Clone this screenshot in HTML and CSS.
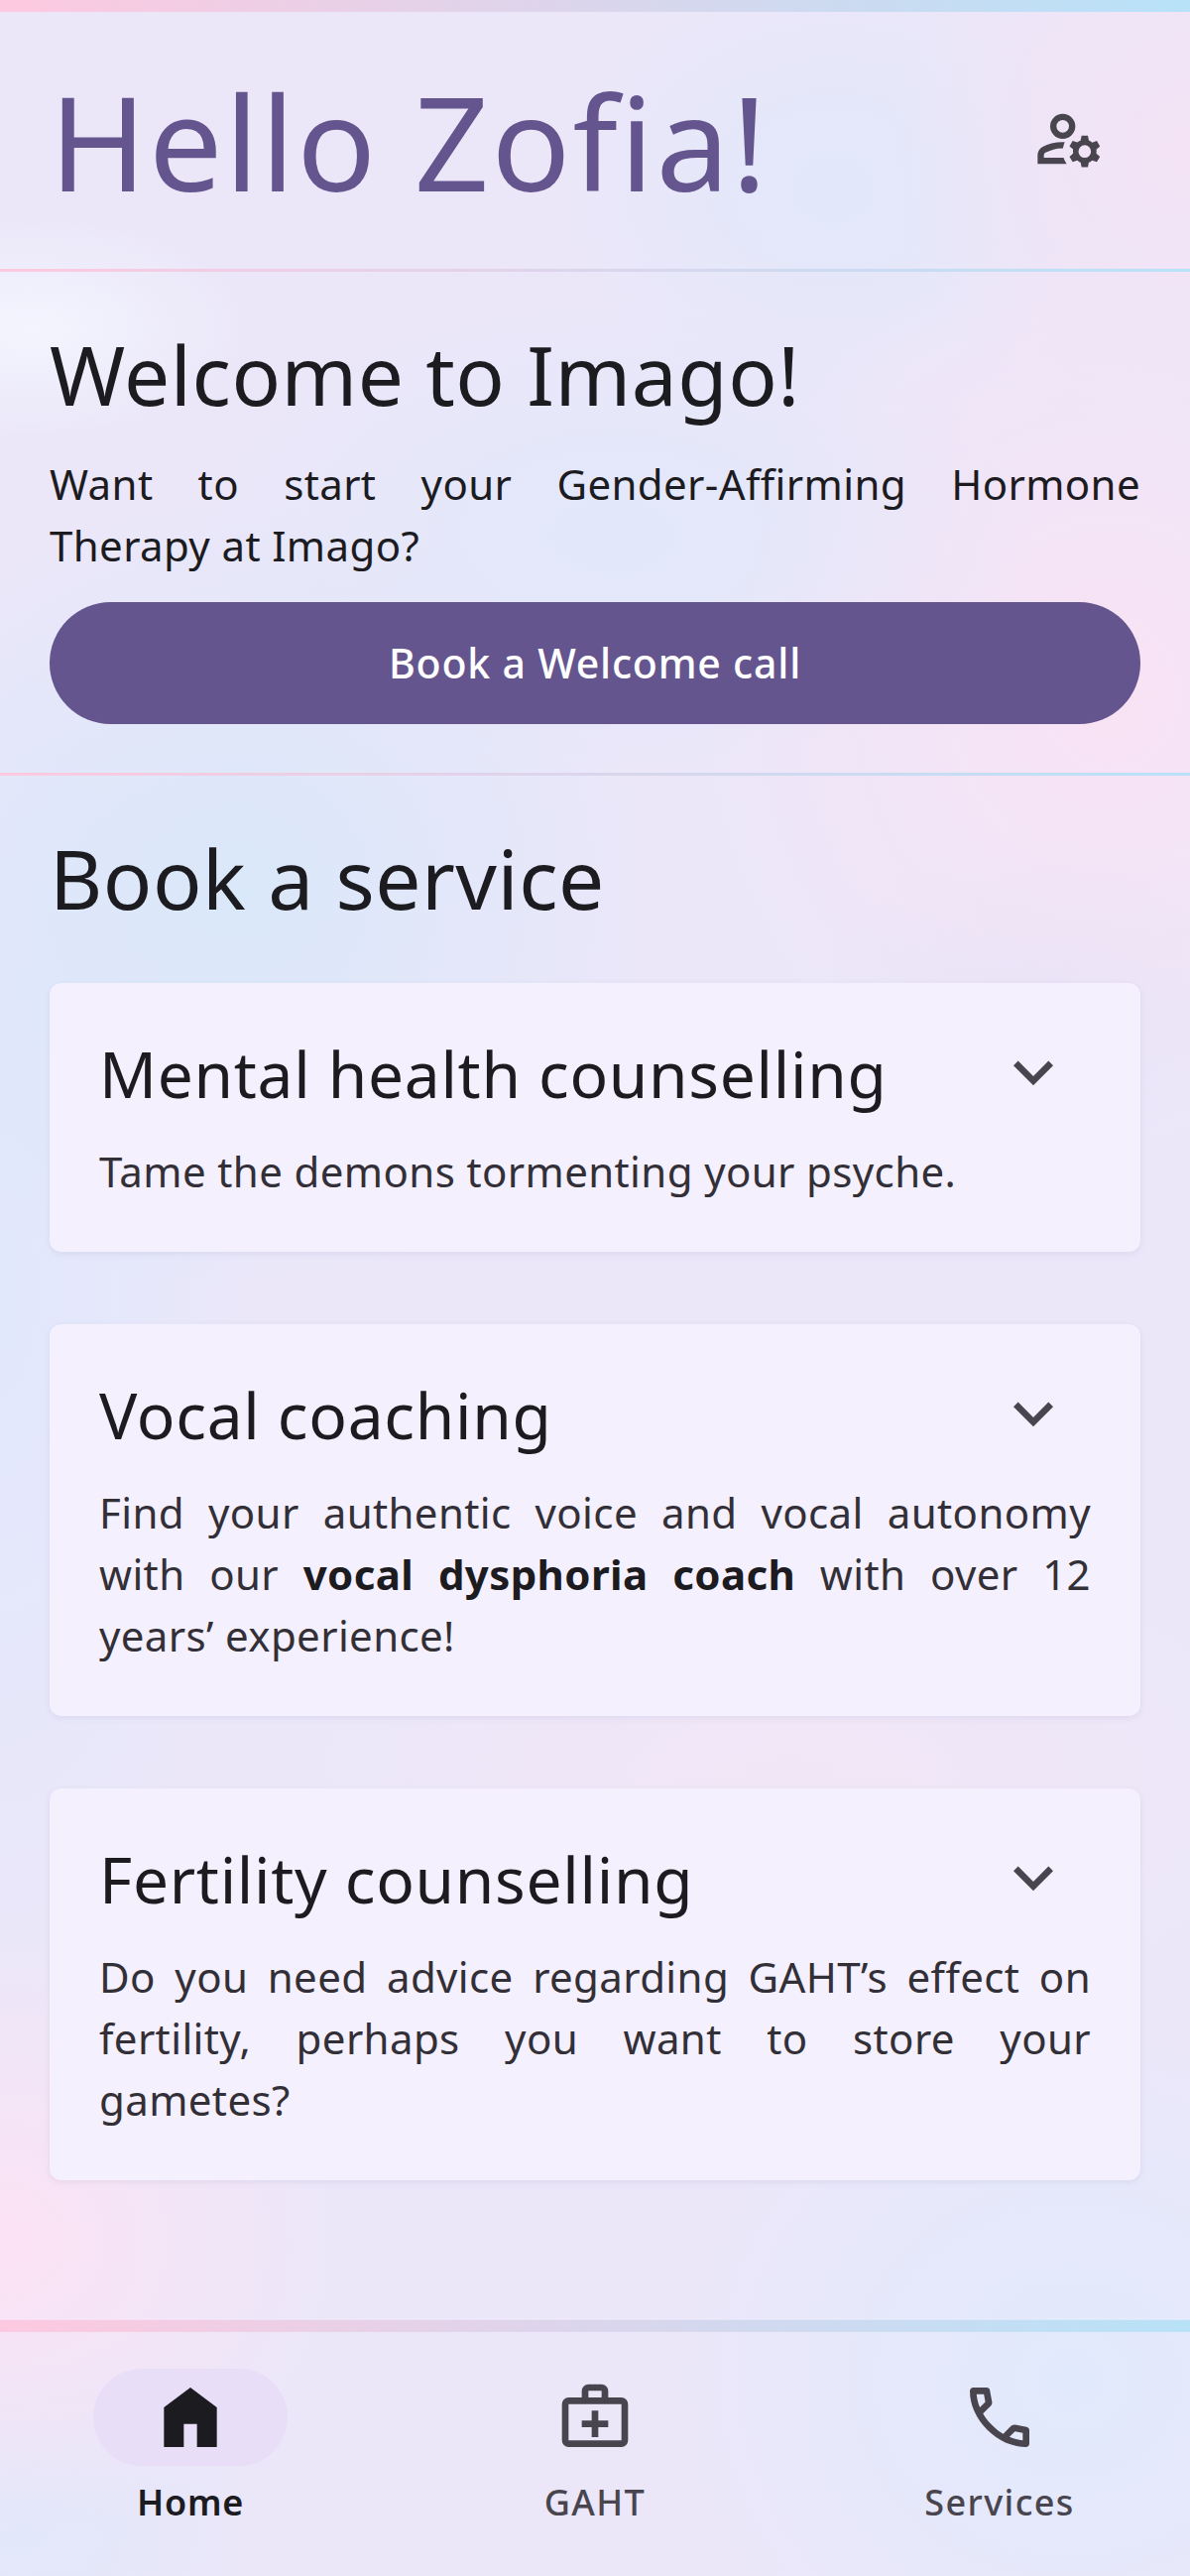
FILE: index.html
```html
<!DOCTYPE html>
<html lang="en">
<head>
  <meta charset="UTF-8">
  <meta name="viewport" content="width=device-width, initial-scale=1.0">
  <title>Imago</title>
  <link rel="stylesheet" href="styles.css">
</head>
<body>
  <div class="rainbow rainbow-thick"></div>

  <header class="app-header">
    <h1>Hello Zofia!</h1>
    <svg class="icon settings-icon" viewBox="0 -960 960 960"><path d="M400-480q-66 0-113-47t-47-113q0-66 47-113t113-47q66 0 113 47t47 113q0 66-47 113t-113 47ZM80-160v-112q0-33 17-62t47-44q51-26 115-44t141-18h14q6 0 12 2-8 18-13.5 37.5T404-360h-4q-71 0-127.5 18T180-306q-9 5-14.5 14t-5.5 20v32h252q6 21 16 41.5t22 38.5H80Zm560 40-12-60q-12-5-22.5-10.5T584-204l-58 18-40-68 46-40q-2-14-2-26t2-26l-46-40 40-68 58 18q11-8 21.5-13.5T628-460l12-60h80l12 60q12 5 22.5 11t21.5 15l58-20 40 70-46 40q2 12 2 25t-2 25l46 40-40 68-58-18q-11 8-21.5 13.5T732-180l-12 60h-80Zm40-120q33 0 56.5-23.5T760-320q0-33-23.5-56.5T680-400q-33 0-56.5 23.5T600-320q0 33 23.5 56.5T680-240ZM400-560q33 0 56.5-23.5T480-640q0-33-23.5-56.5T400-720q-33 0-56.5 23.5T320-640q0 33 23.5 56.5T400-560Zm0-80Zm12 400Z"/></svg>
  </header>
  <div class="rainbow"></div>

  <section class="welcome">
    <h2>Welcome to Imago!</h2>
    <p>Want to start your Gender-Affirming Hormone Therapy at Imago?</p>
    <button type="button" class="welcome-btn">Book a Welcome call</button>
  </section>
  <div class="rainbow"></div>

  <main class="services">
    <h2>Book a service</h2>

    <article class="card">
      <div class="card-head">
        <h3>Mental health counselling</h3>
        <svg class="icon chevron" viewBox="0 -960 960 960"><path d="M480-345 240-585l56-56 184 184 184-184 56 56-240 240Z"/></svg>
      </div>
      <p>Tame the demons tormenting your psyche.</p>
    </article>

    <article class="card">
      <div class="card-head">
        <h3>Vocal coaching</h3>
        <svg class="icon chevron" viewBox="0 -960 960 960"><path d="M480-345 240-585l56-56 184 184 184-184 56 56-240 240Z"/></svg>
      </div>
      <p>Find your authentic voice and vocal autonomy with our <strong>vocal dysphoria coach</strong> with over 12 years’ experience!</p>
    </article>

    <article class="card">
      <div class="card-head">
        <h3>Fertility counselling</h3>
        <svg class="icon chevron" viewBox="0 -960 960 960"><path d="M480-345 240-585l56-56 184 184 184-184 56 56-240 240Z"/></svg>
      </div>
      <p><span class="full-lines">Do you need advice regarding GAHT’s effect on fertility, perhaps you want to store your</span> gametes?</p>
    </article>
  </main>

  <div class="rainbow rainbow-thick"></div>
  <nav class="bottom-nav">
    <a class="nav-item active">
      <span class="nav-pill">
        <svg class="icon" viewBox="0 -960 960 960"><path d="M160-120v-480l320-240 320 240v480H560v-280H400v280H160Z"/></svg>
      </span>
      <span class="nav-label">Home</span>
    </a>
    <a class="nav-item">
      <span class="nav-pill">
        <svg class="icon" viewBox="0 -960 960 960"><path d="M160-120q-33 0-56.5-23.5T80-200v-440q0-33 23.5-56.5T160-720h160v-80q0-33 23.5-56.5T400-880h160q33 0 56.5 23.5T640-800v80h160q33 0 56.5 23.5T880-640v440q0 33-23.5 56.5T800-120H160Zm0-80h640v-440H160v440Zm240-520h160v-80H400v80ZM160-200v-440 440Zm280-160v120h80v-120h120v-80H520v-120h-80v120H320v80h120Z"/></svg>
      </span>
      <span class="nav-label">GAHT</span>
    </a>
    <a class="nav-item">
      <span class="nav-pill">
        <svg class="icon" viewBox="0 -960 960 960"><path d="M798-120q-125 0-247-54.5T329-329Q229-429 174.5-551T120-798q0-18 12-30t30-12h162q14 0 25 9.5t13 22.5l26 140q2 16-1 27t-11 19l-97 98q20 37 47.5 71.5T387-386q31 31 65 57.5t72 48.5l94-94q9-9 23.5-13.5T670-390l138 28q14 4 23 14.5t9 23.5v162q0 18-12 30t-30 12ZM241-600l66-66-17-94h-89q5 41 14 81t26 79Zm358 358q39 17 79.5 27t81.5 13v-88l-94-19-67 67ZM241-600Zm358 358Z"/></svg>
      </span>
      <span class="nav-label">Services</span>
    </a>
  </nav>
</body>
</html>
```

FILE: styles.css
```css
/* General styling */
html, body {
  height: 100%;
}

body {
  margin: 0;
  display: flex;
  flex-direction: column;
  font-family: "Noto Sans", sans-serif;
  color: #1c1b1f;
  background-color: #ebe7f9;
  background-image:
    radial-gradient(ellipse 220px 110px at 30px 330px, rgba(244, 246, 255, 0.9), transparent),
    radial-gradient(ellipse 420px 240px at 620px 540px, rgba(224, 232, 250, 0.9), transparent),
    radial-gradient(ellipse 420px 400px at 240px 900px, rgba(214, 232, 250, 0.85), transparent),
    radial-gradient(ellipse 420px 460px at 1120px 700px, rgba(250, 226, 244, 0.9), transparent),
    radial-gradient(ellipse 240px 160px at 1060px 1000px, rgba(226, 228, 248, 0.9), transparent),
    radial-gradient(ellipse 260px 700px at 0px 1300px, rgba(224, 232, 252, 0.9), transparent),
    radial-gradient(ellipse 500px 260px at 800px 1800px, rgba(242, 230, 246, 0.9), transparent),
    radial-gradient(ellipse 340px 300px at 0px 2260px, rgba(252, 226, 244, 0.95), transparent),
    radial-gradient(ellipse 400px 360px at 1080px 2400px, rgba(224, 234, 252, 0.95), transparent),
    radial-gradient(ellipse 240px 200px at 20px 2540px, rgba(224, 232, 250, 0.9), transparent),
    radial-gradient(ellipse 300px 300px at 1200px 150px, rgba(244, 226, 244, 0.9), transparent),
    radial-gradient(ellipse 280px 220px at 840px 190px, rgba(224, 232, 250, 0.9), transparent);
}

h1, h2, h3, p {
  margin: 0;
  font-weight: 400;
}

.icon {
  width: 80px;
  height: 80px;
  fill: currentColor;
  display: block;
}

.rainbow {
  flex: none;
  height: 3px;
  background: linear-gradient(90deg, #fdc9e0, #b8e2f8);
}

.rainbow-thick {
  height: 12px;
}

/* Header */
.app-header {
  flex: none;
  height: 259px;
  box-sizing: border-box;
  padding: 0 50px;
  display: flex;
  align-items: center;
  justify-content: space-between;
}

.app-header h1 {
  font-size: 132px;
  line-height: 1;
  letter-spacing: 2.2px;
  color: #65558f;
}

.settings-icon {
  width: 76px;
  height: 76px;
  margin: 0 34px 4px 0;
  color: #49454f;
}

/* Welcome block */
.welcome {
  flex: none;
  height: 505px;
  box-sizing: border-box;
  padding: 55px 50px 0;
}

.welcome h2,
.services h2 {
  font-size: 82px;
  line-height: 96px;
  letter-spacing: 0.5px;
}

.welcome p {
  margin-top: 32px;
  font-size: 42px;
  line-height: 62px;
  letter-spacing: 0.38px;
  text-align: justify;
}

.welcome-btn {
  display: block;
  width: 100%;
  height: 123px;
  margin-top: 26px;
  padding-bottom: 2px;
  border: none;
  border-radius: 62px;
  background: #65558f;
  color: #fff;
  font-family: inherit;
  font-size: 41px;
  font-weight: 500;
  letter-spacing: 0.8px;
}

/* Services */
.services {
  flex: 1;
  padding: 55px 50px 0;
}

.card {
  box-sizing: border-box;
  margin-top: 73px;
  padding: 52px 50px 0;
  background: #f5f0fe;
  border-radius: 12px;
  box-shadow: 0 2px 6px rgba(101, 85, 143, 0.1);
  color: #322f37;
}

.services h2 + .card {
  margin-top: 58px;
}

.card:nth-of-type(1) {
  height: 271px;
}

.card:nth-of-type(2),
.card:nth-of-type(3) {
  height: 395px;
}

.card-head {
  display: flex;
  justify-content: space-between;
  align-items: center;
  height: 80px;
}

.card-head h3 {
  font-size: 64px;
  line-height: 80px;
  letter-spacing: 0.7px;
  color: #1c1b1f;
}

.chevron {
  margin-right: 18px;
  color: #49454f;
}

.card p {
  margin-top: 27px;
  font-size: 42px;
  line-height: 62px;
  letter-spacing: 0.38px;
  text-align: justify;
}

.card strong {
  color: #1c1b1f;
}

/* the last of these lines has to stay stretched, gametes? goes on its own */
.full-lines {
  display: block;
  text-align-last: justify;
}

/* Bottom navigation */
.bottom-nav {
  flex: none;
  height: 246px;
  box-sizing: border-box;
  padding: 37px 92px 0;
  display: flex;
  justify-content: space-between;
}

.nav-item {
  width: 200px;
  display: flex;
  flex-direction: column;
  align-items: center;
  color: #49454f;
}

.nav-pill {
  width: 196px;
  height: 98px;
  border-radius: 49px;
  display: flex;
  align-items: center;
  justify-content: center;
}

.active .nav-pill {
  background: #e8def8;
}

.active {
  color: #1c1b1f;
}

.nav-label {
  margin-top: 15px;
  font-size: 36px;
  line-height: 44px;
  font-weight: 500;
  letter-spacing: 1.4px;
}

.active .nav-label {
  font-weight: 600;
  letter-spacing: 0.8px;
}
```
